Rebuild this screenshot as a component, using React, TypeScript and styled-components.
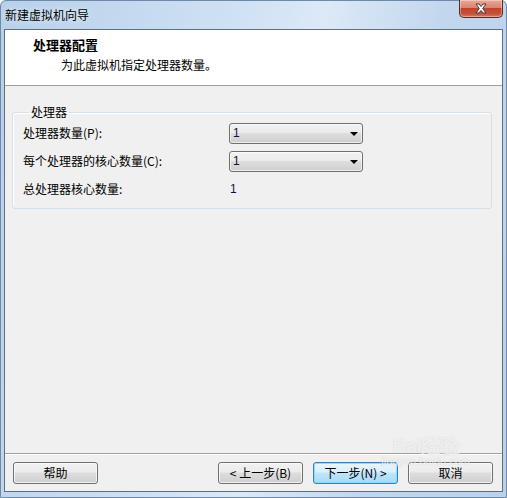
import styled, { createGlobalStyle } from "styled-components";

const GlobalStyle = createGlobalStyle`
  html, body {
    margin: 0;
    padding: 0;
    width: 507px;
    height: 498px;
    overflow: hidden;
  }
  body {
    font-family: "Noto Sans CJK SC", "Noto Sans", sans-serif;
    font-size: 12px;
    color: #000;
  }
`;

const Frame = styled.div`
  position: relative;
  width: 507px;
  height: 498px;
  box-sizing: border-box;
  display: flex;
  flex-direction: column;
  background: linear-gradient(100deg, #b7d0ea 0%, #cfe1f4 40%, #dce9f7 55%, #c2d7ee 75%, #b9d2ec 100%);
  border: 1px solid #6f8aa8;
  border-radius: 6px 6px 0 0;
`;

const TitleBar = styled.div`
  height: 28px;
  display: flex;
  align-items: flex-start;
  justify-content: space-between;
  padding-left: 4px;
`;

const TitleText = styled.span`
  margin-top: 6px;
  line-height: 16px;
  font-size: 12px;
  color: #000;
  text-shadow: 0 0 6px rgba(255, 255, 255, 0.9);
`;

const CloseButton = styled.div`
  width: 44px;
  height: 18px;
  margin-right: 3px;
  margin-top: -1px;
  display: flex;
  align-items: center;
  justify-content: center;
  box-sizing: border-box;
  border: 1px solid #5b2a23;
  border-top: none;
  border-radius: 0 0 5px 5px;
  background: linear-gradient(#e9a897 0%, #d98570 45%, #c0432a 50%, #c5503a 80%, #d77a5e 100%);
  box-shadow: inset 0 0 0 1px rgba(255, 255, 255, 0.35);
`;

const Client = styled.div`
  flex: 1;
  margin: 0 3px 5px 3px;
  border: 1px solid #5f6f80;
  background: #f0f0f0;
  display: flex;
  flex-direction: column;
`;

const Header = styled.div`
  height: 56px;
  background: #fff;
  border-bottom: 1px solid #a0a0a0;
  box-sizing: border-box;
  padding: 6px 0 0 28px;
`;

const HeaderTitle = styled.div`
  font-size: 13px;
  font-weight: bold;
  line-height: 18px;
`;

const HeaderSub = styled.div`
  padding-left: 28px;
  margin-top: 2px;
  line-height: 18px;
`;

const Body = styled.div`
  flex: 1;
  padding: 19px 10px 0 7px;
`;

const Group = styled.fieldset`
  margin: 0;
  padding: 0 0 10px 10px;
  border: 1px solid #d5dfe5;
  border-radius: 3px;
  box-shadow: inset 1px 1px 0 #fff;
  height: 104px;
  box-sizing: border-box;
`;

const Legend = styled.legend`
  padding: 0 2px;
  margin-left: 6px;
  line-height: 14px;
`;

const Fields = styled.div`
  display: grid;
  grid-template-columns: 206px 134px;
  grid-auto-rows: 28px;
  align-items: center;
`;

const Label = styled.span`
  line-height: 16px;
`;

const Value = styled.span`
  padding-left: 1px;
  color: #1a0f33;
  font-family: "Liberation Sans", sans-serif;
`;

const Combo = styled.div`
  height: 21px;
  box-sizing: border-box;
  border: 1px solid #707070;
  border-radius: 3px;
  background: linear-gradient(#f2f2f2 0%, #ebebeb 45%, #dddddd 50%, #cfcfcf 100%);
  box-shadow: inset 0 0 0 1px rgba(255, 255, 255, 0.6);
  display: flex;
  align-items: center;
  justify-content: space-between;
  padding: 0 4px 0 3px;
  font-family: "Liberation Sans", sans-serif;
  color: #1a0f33;
`;

const Arrow = styled.span`
  width: 0;
  height: 0;
  border-left: 4px solid transparent;
  border-right: 4px solid transparent;
  border-top: 4px solid #000;
  margin-top: 1px;
`;

const Footer = styled.div`
  border-top: 1px solid #a0a0a0;
  box-shadow: inset 0 1px 0 #fff;
  display: flex;
  align-items: center;
  padding: 8px 9px 7px 8px;
  gap: 10px;
`;

const Button = styled.button<{ $primary?: boolean }>`
  width: 85px;
  height: 22px;
  padding: 0;
  box-sizing: border-box;
  font-family: "Noto Sans CJK SC", "Liberation Sans", sans-serif;
  font-size: 12px;
  line-height: 16px;
  color: #000;
  border-radius: 3px;
  border: 1px solid ${(p) => (p.$primary ? "#3c7fb1" : "#707070")};
  background: ${(p) =>
    p.$primary
      ? "linear-gradient(#eaf6fd 0%, #d9f0fc 45%, #bee6fd 50%, #a7d9f5 100%)"
      : "linear-gradient(#f2f2f2 0%, #ebebeb 45%, #dddddd 50%, #cfcfcf 100%)"};
  box-shadow: inset 0 0 0 1px ${(p) => (p.$primary ? "rgba(130, 220, 255, 0.9)" : "rgba(255, 255, 255, 0.7)")};
`;

const Spacer = styled.div`
  flex: 1;
`;

const Watermark = styled.div`
  position: absolute;
  right: 36px;
  bottom: 30px;
  display: flex;
  flex-direction: column;
  align-items: center;
  color: rgba(255, 255, 255, 0.7);
  font-family: "Liberation Sans", sans-serif;
  pointer-events: none;
  text-shadow: 0 0 1px rgba(160, 160, 160, 0.5);
`;

const MarkTop = styled.span`
  font-size: 20px;
  font-weight: bold;
  line-height: 20px;
  letter-spacing: -1px;
`;

const MarkBottom = styled.span`
  font-size: 11px;
  line-height: 11px;
`;

const CloseGlyph = () => (
  <svg width="14" height="11" viewBox="0 0 14 11">
    <path
      d="M2 1h3l2 2.5L9 1h3L8.7 5.5 12 10H9L7 7.5 5 10H2l3.3-4.5z"
      fill="#fff"
      stroke="#3b3b3b"
      strokeWidth="1"
      strokeLinejoin="round"
    />
  </svg>
);

export default function App() {
  return (
    <>
      <GlobalStyle />
      <Frame>
        <TitleBar>
          <TitleText>新建虚拟机向导</TitleText>
          <CloseButton>
            <CloseGlyph />
          </CloseButton>
        </TitleBar>
        <Client>
          <Header>
            <HeaderTitle>处理器配置</HeaderTitle>
            <HeaderSub>为此虚拟机指定处理器数量。</HeaderSub>
          </Header>
          <Body>
            <Group>
              <Legend>处理器</Legend>
              <Fields>
                <Label>处理器数量(P):</Label>
                <Combo>
                  1<Arrow />
                </Combo>
                <Label>每个处理器的核心数量(C):</Label>
                <Combo>
                  1<Arrow />
                </Combo>
                <Label>总处理器核心数量:</Label>
                <Value>1</Value>
              </Fields>
            </Group>
          </Body>
          <Footer>
            <Button>帮助</Button>
            <Spacer />
            <Button>&lt; 上一步(B)</Button>
            <Button $primary>下一步(N) &gt;</Button>
            <Button>取消</Button>
          </Footer>
        </Client>
        <Watermark>
          <MarkTop>Bai经验</MarkTop>
          <MarkBottom>jingyan.baidu.com</MarkBottom>
        </Watermark>
      </Frame>
    </>
  );
}
